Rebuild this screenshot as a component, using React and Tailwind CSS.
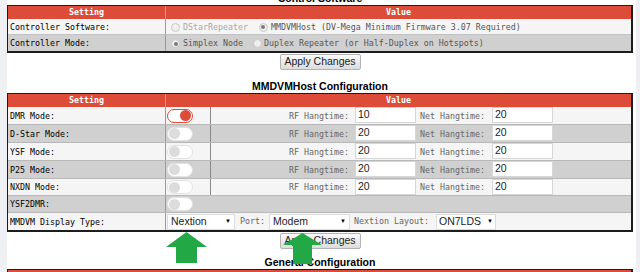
const mono = "font-['DejaVu_Sans_Mono',monospace] text-[8.3px]";
const sans = "font-['Liberation_Sans',Arial,sans-serif]";

const modes = [
  { label: 'DMR Mode:', on: true, rf: '10', net: '20', h: 'h-[18px]', bg: 'bg-[#f5f5f5]' },
  { label: 'D-Star Mode:', rf: '20', net: '20', h: 'h-[18px]', bg: 'bg-[#d0d0d0]' },
  { label: 'YSF Mode:', rf: '20', net: '20', h: 'h-[18px]', bg: 'bg-[#f5f5f5]' },
  { label: 'P25 Mode:', rf: '20', net: '20', h: 'h-[18px]', bg: 'bg-[#d0d0d0]' },
  { label: 'NXDN Mode:', rf: '20', net: '20', h: 'h-[17px]', bg: 'bg-[#f5f5f5]' },
];

function Toggle({ on }) {
  return (
    <div
      className={`w-[26px] h-[14px] rounded-full bg-white border flex items-center px-[1px] ${
        on ? 'border-[#dd4b39] justify-end' : 'border-[#e2e2e2] justify-start'
      }`}
    >
      <div className={`w-[11px] h-[11px] rounded-full ${on ? 'bg-[#dd4b39]' : 'bg-[#dcdcdc]'}`} />
    </div>
  );
}

function Radio({ checked }) {
  return (
    <span className="w-[9px] h-[9px] rounded-full border border-[#c8c8c8] bg-[#f0f0f0] flex items-center justify-center shrink-0">
      {checked && <span className="w-[4px] h-[4px] rounded-full bg-[#7a7a7a]" />}
    </span>
  );
}

function ApplyButton() {
  return (
    <div className="flex justify-center">
      <div
        className={`${sans} h-[16px] w-[81px] flex items-center justify-center text-[10.5px] text-[#222] border border-[#b3b3b3] rounded-[2px] bg-linear-to-b from-[#fafafa] to-[#dcdcdc]`}
      >
        Apply Changes
      </div>
    </div>
  );
}

function Title({ children, className }) {
  return (
    <div className={`${sans} ${className} h-[13px] leading-[13px] text-center font-bold text-[10.5px] text-black`}>
      {children}
    </div>
  );
}

function Header() {
  return (
    <div className={`${mono} flex h-[13px] bg-[#dd4b39] text-white font-bold items-center`}>
      <div className="w-[158px] h-full border-r border-[#ec9488] flex items-center justify-center">Setting</div>
      <div className="flex-1 text-center">Value</div>
    </div>
  );
}

function Input({ value }) {
  return (
    <div className={`${sans} w-[61px] h-[16px] bg-white border border-[#d6d6d6] text-[10.5px] text-[#222] pl-[2px] flex items-center shrink-0`}>
      {value}
    </div>
  );
}

function Select({ value, w }) {
  return (
    <div className={`${sans} ${w} h-[16px] bg-white border border-[#dcdcdc] text-[10.5px] text-[#222] px-[3px] flex items-center justify-between shrink-0`}>
      <span>{value}</span>
      <span className="text-[6px] text-black">▼</span>
    </div>
  );
}

export default function App() {
  return (
    <div className="relative w-[640px] h-[272px] overflow-hidden bg-[#eef0f4] flex">
      <div className="w-[7px] shrink-0" />
      <div className="w-[629px] bg-white shrink-0">
        <div className="w-[626px]">
          <Title className="-mt-[8px]">Control Software</Title>

          <div className="border-l border-t border-r-2 border-b-2 border-[#1c1c1c]">
            <Header />
            <div className={`${mono} flex h-[16px] bg-[#f5f5f5] border-b border-[#c2c2c2]`}>
              <div className="w-[158px] border-r border-[#9a9a9a] pl-[2px] pt-[1px] flex items-center text-black">Controller Software:</div>
              <div className="flex-1 flex items-center pl-[5px] pt-[1px] text-[#555]">
                <Radio />
                <span className="ml-[3px] text-[#a8a8a8]">DStarRepeater</span>
                <span className="ml-[11px]"><Radio checked /></span>
                <span className="ml-[3px]">MMDVMHost (DV-Mega Minimum Firmware 3.07 Required)</span>
              </div>
            </div>
            <div className={`${mono} flex h-[16px] bg-[#d0d0d0]`}>
              <div className="w-[158px] border-r border-[#9a9a9a] pl-[2px] pt-[1px] flex items-center text-black">Controller Mode:</div>
              <div className="flex-1 flex items-center pl-[5px] pt-[1px] text-[#555]">
                <Radio checked />
                <span className="ml-[3px]">Simplex Node</span>
                <span className="ml-[10px]"><Radio /></span>
                <span className="ml-[2px]">Duplex Repeater (or Half-Duplex on Hotspots)</span>
              </div>
            </div>
          </div>

          <div className="mt-[1px]">
            <ApplyButton />
          </div>

          <Title className="mt-[10px]">MMDVMHost Configuration</Title>

          <div className="border-l border-t border-r-2 border-b-2 border-[#1c1c1c]">
            <Header />
            {modes.map((m) => (
              <div key={m.label} className={`${mono} flex ${m.h} ${m.bg} border-b border-[#b8b8b8]`}>
                <div className="w-[158px] border-r border-[#9a9a9a] pl-[2px] pt-[1px] flex items-center text-black shrink-0">{m.label}</div>
                <div className="w-[45px] border-r border-[#8a8a8a] pl-[1px] flex items-center shrink-0">
                  <Toggle on={m.on} />
                </div>
                <div className="w-[144px] pr-[6px] pt-[1px] flex items-center justify-end text-[#666] shrink-0">RF Hangtime:</div>
                <Input value={m.rf} />
                <div className="w-[76px] pl-[4px] pt-[1px] flex items-center text-[#666] shrink-0">Net Hangtime:</div>
                <Input value={m.net} />
                <div className="flex-1" />
              </div>
            ))}
            <div className={`${mono} flex h-[17px] bg-[#d0d0d0] border-b border-[#b8b8b8]`}>
              <div className="w-[158px] border-r border-[#9a9a9a] pl-[2px] pt-[1px] flex items-center text-black shrink-0">YSF2DMR:</div>
              <div className="pl-[1px] flex items-center">
                <Toggle />
              </div>
            </div>
            <div className={`${mono} flex h-[17px] bg-[#f5f5f5] items-center`}>
              <div className="w-[158px] h-full border-r border-[#9a9a9a] pl-[2px] pt-[1px] flex items-center text-black shrink-0">MMDVM Display Type:</div>
              <div className="ml-[1px]">
                <Select value="Nextion" w="w-[68px]" />
              </div>
              <span className="ml-[5px] w-[29px] text-[#666]">Port:</span>
              <Select value="Modem" w="w-[81px]" />
              <span className="ml-[4px] w-[82px] text-[#666]">Nextion Layout:</span>
              <div className={`${sans} w-[60px] h-[16px] bg-white border border-[#dcdcdc] text-[10.5px] text-[#222] px-[2px] flex items-center gap-[6px]`}>
                <span>ON7LDS</span>
                <span className="text-[6px] text-black">▼</span>
              </div>
            </div>
          </div>

          <div className="mt-[1px]">
            <ApplyButton />
          </div>

          <Title className="mt-[7px]">General Configuration</Title>

          <div className="border-l border-t border-r-2 border-[#1c1c1c]">
            <div className="h-[13px] bg-[#dd4b39]" />
          </div>
        </div>
      </div>
      <div className="flex-1" />

      <svg className="absolute left-0 top-0 pointer-events-none" width="640" height="272" viewBox="0 0 640 272">
        <polygon fill="#22a845" points="186.5,232 207,247 197,247 197,263 176,263 176,247 166,247" />
        <polygon fill="#22a845" points="302.5,233 322,245 312,245 312,264 293,264 293,245 283,245" />
      </svg>
    </div>
  );
}
